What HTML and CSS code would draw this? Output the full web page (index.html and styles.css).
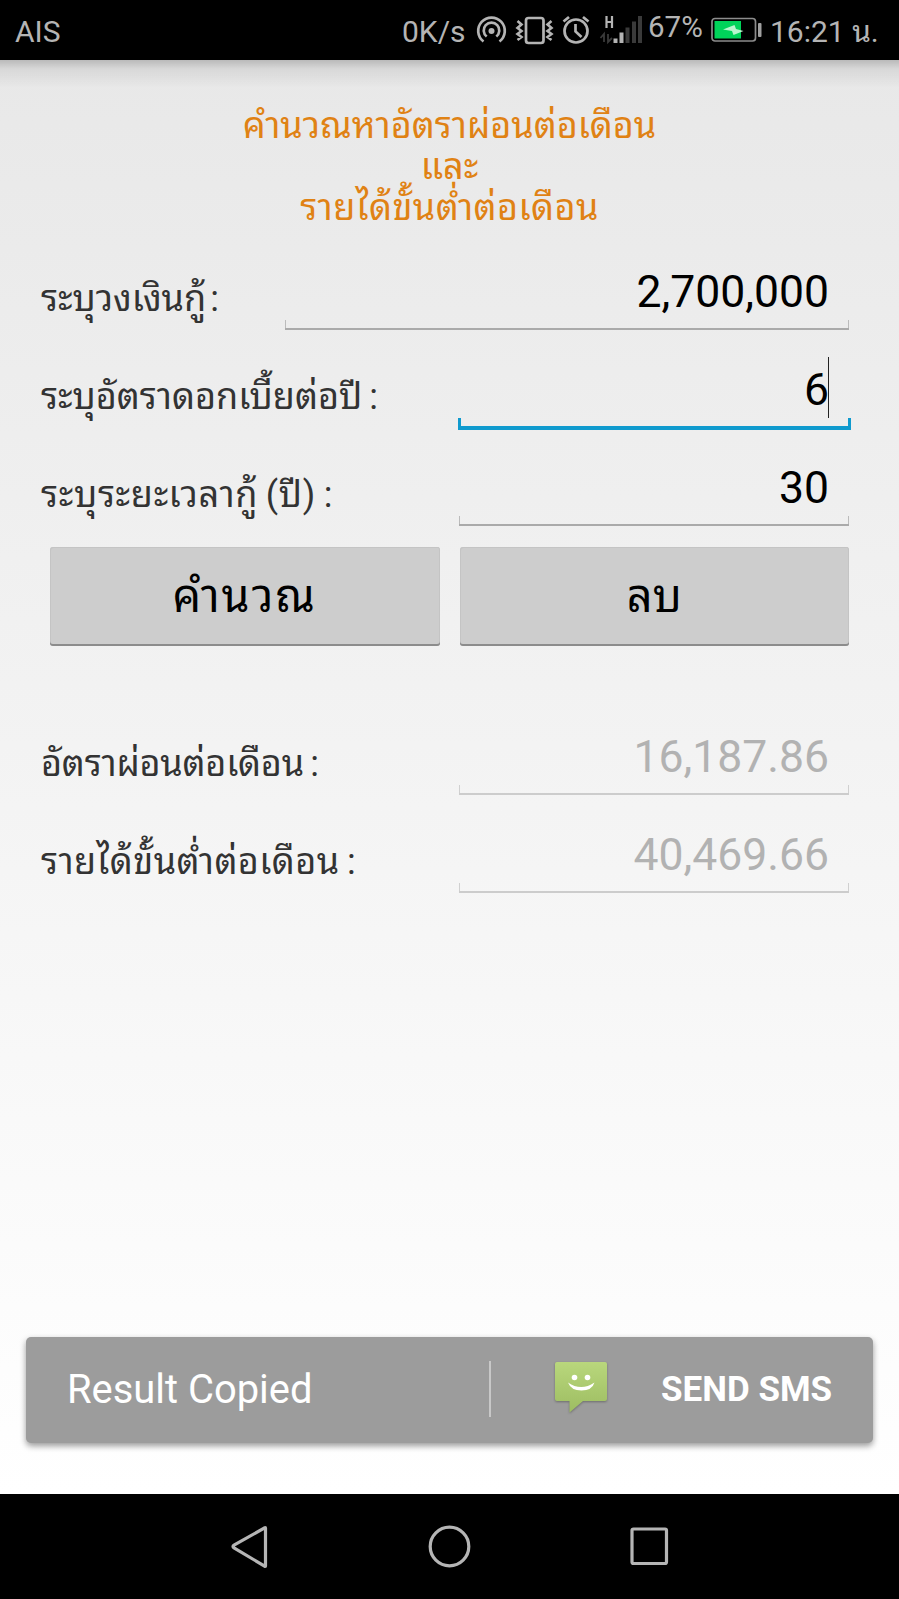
FILE: index.html
```html
<!DOCTYPE html>
<html lang="th">

<head>
    <meta charset="UTF-8">
    <meta name="viewport" content="width=device-width, initial-scale=1.0">
    <title>คำนวณหาอัตราผ่อนต่อเดือน</title>
    <link rel="stylesheet" href="styles.css">
</head>

<body>
    <header class="status-bar">
        <span class="carrier">AIS</span>
        <span class="speed">0K/s</span>
        <!-- hotspot, vibrate, alarm, signal -->
        <svg class="status-icons" width="168" height="36" viewBox="0 0 168 36" fill="none" stroke="#b4b4b4" stroke-width="2.7">
            <path d="M9.5 29.5A13.3 13.3 0 1 1 25.500 29.500"></path>
            <path d="M12.700 24.500A7.800 7.800 0 1 1 22.300 24.500"></path>
            <circle cx="17.500" cy="19" r="3" fill="#b4b4b4" stroke="none"></circle>
            <rect x="52" y="6" width="17.500" height="25" rx="2.500"></rect>
            <path d="M43.500 9l4 3.500-4 3.500 4 3-4 3 4 3-4 3M77.500 9l-4 3.500 4 3.500-4 3 4 3-4 3 4 3" stroke-width="2.600"></path>
            <circle cx="102" cy="19" r="11.500"></circle>
            <path d="M101.500 12v7.500l6 5.500M89.500 9.500l5.500-4.500M114.500 9.500L109 5"></path>
            <path d="M132.500 4v12M138 4v12M132.500 10h5.500" stroke-width="2.200"></path>
            <path d="M130 30v-8l-3.500 4M134 22v8l4-4" stroke="#3a3a3a" stroke-width="1.800"></path>
            <path d="M141.500 31v-4.500M147.500 31V20.500" stroke-width="4"></path>
            <path d="M153.500 31V15.500M160 31V9.500M166 31V4" stroke="#3a3a3a" stroke-width="4"></path>
        </svg>
        <span class="percent">67%</span>
        <svg class="battery" width="52" height="26" viewBox="0 0 52 26">
            <rect x="1" y="1.500" width="43.500" height="22.500" rx="3" fill="none" stroke="#8c8c8c" stroke-width="1.700"></rect>
            <rect x="3.500" y="4" width="26.500" height="17.500" fill="#00d45a"></rect>
            <path d="M12 12.500L23.500 8l1.500 4 7.500 2-10 4-1.500-4z" fill="#b9f5ce"></path>
            <rect x="47" y="6" width="3.500" height="14" rx="1" fill="#a0a0a0"></rect>
        </svg>
        <span class="clock">16:21 น.</span>
    </header>

    <main class="screen">
        <h1 class="title">
            <span class="title-line title-first">คำนวณหาอัตราผ่อนต่อเดือน</span>
            <span class="title-line title-and">และ</span>
            <span class="title-line title-last">รายได้ขั้นต่ำต่อเดือน</span>
        </h1>

        <section class="form">
            <div class="row">
                <div class="label label-loan">ระบุวงเงินกู้ :</div>
                <div class="field field-wide">2,700,000</div>
            </div>
            <div class="row">
                <div class="label label-rate">ระบุอัตราดอกเบี้ยต่อปี :</div>
                <div class="field field-focus">6<i class="caret"></i></div>
            </div>
            <div class="row">
                <div class="label label-years">ระบุระยะเวลากู้ (ปี) :</div>
                <div class="field">30</div>
            </div>
            <div class="buttons">
                <button class="btn btn-calc">คำนวณ</button>
                <button class="btn">ลบ</button>
            </div>
        </section>

        <section class="form results">
            <div class="row">
                <div class="label label-monthly">อัตราผ่อนต่อเดือน :</div>
                <div class="field field-disabled">16,187.86</div>
            </div>
            <div class="row">
                <div class="label label-income">รายได้ขั้นต่ำต่อเดือน :</div>
                <div class="field field-disabled">40,469.66</div>
            </div>
        </section>

        <div class="toast">
            <span class="toast-text">Result Copied</span>
            <span class="toast-divider"></span>
            <svg class="sms-icon" width="56" height="56" viewBox="0 0 56 56">
                <defs>
                    <linearGradient id="smsFill" x1="0" y1="0" x2="0" y2="1">
                        <stop offset="0" stop-color="#b9d77c"></stop>
                        <stop offset="1" stop-color="#9dbd62"></stop>
                    </linearGradient>
                </defs>
                <path d="M4 1h48q2 0 2 2v35q0 2-2 2H30L16.500 51.500V40H4q-2 0-2-2V3q0-2 2-2z" fill="url(#smsFill)"></path>
                <circle cx="21.500" cy="16.500" r="2.800" fill="#fff"></circle>
                <circle cx="34.500" cy="16.500" r="2.800" fill="#fff"></circle>
                <path d="M15 21.500q13 9 26.500 0q-2.500 8-13 8T15 21.500z" fill="#fff"></path>
            </svg>
            <span class="toast-action">SEND SMS</span>
        </div>
    </main>

    <nav class="nav-bar">
        <svg width="44" height="44" viewBox="0 0 44 44"><path d="M37.500 3v38q0 1-1 0L6 23q-2-1.500 0-3L36.500 3q1-1 1 0z"></path></svg>
        <svg width="44" height="44" viewBox="0 0 44 44"><circle cx="21.500" cy="21.500" r="19.300"></circle></svg>
        <svg width="44" height="44" viewBox="0 0 44 44"><rect x="4" y="4" width="34.500" height="34.500" rx="1.500"></rect></svg>
    </nav>
</body>

</html>
```
FILE: styles.css
```css
* {
    box-sizing: border-box;
}

body {
    margin: 0;
    width: 899px;
    height: 1599px;
    display: flex;
    flex-direction: column;
    overflow: hidden;
    font-family: Roboto, "Noto Sans Thai Looped", "Droid Sans Thai", Loma, Waree, Garuda, Umpush, Laksaman, "Noto Sans", sans-serif;
    background-color: #000;
}

/* status bar */
.status-bar {
    height: 60px;
    display: flex;
    align-items: center;
    color: #b4b4b4;
    font-size: 30px;
    line-height: 60px;
    white-space: nowrap;
}

.carrier {
    width: 387px;
    padding-left: 15px;
    padding-top: 3px;
}

.speed {
    width: 87px;
    padding-left: 15px;
    padding-top: 3px;
}

.status-icons {
    margin-top: -1px;
}

.percent {
    width: 62px;
    margin-left: 6px;
    padding-bottom: 7px;
    font-size: 29.5px;
}

.battery {
    margin-left: 1px;
}

.clock {
    padding-top: 3px;
    margin-left: 7px;
}

/* screen */
.screen {
    height: 1434px;
    display: flex;
    flex-direction: column;
    background: linear-gradient(rgba(0, 0, 0, 0.2), rgba(0, 0, 0, 0.07) 9px, transparent 28px) top / 100% 28px no-repeat,
        linear-gradient(#e8e8e8, #fff);
}

.title {
    height: 172px;
    margin: 0;
    padding-top: 46px;
    display: flex;
    flex-direction: column;
    align-items: center;
    color: #e08214;
    font-size: 36px;
    font-weight: 400;
    white-space: nowrap;
}

.title-line {
    height: 41px;
    line-height: 41px;
}

.title-last {
    letter-spacing: 0.45px;
}

.form {
    width: 849px;
    padding-left: 40px;
}

.row {
    height: 98px;
    display: flex;
    justify-content: space-between;
    align-items: flex-end;
}

.label {
    height: 61px;
    padding-left: 1px;
    line-height: 60px;
    color: #333;
    font-size: 36px;
    white-space: nowrap;
}

.label-loan {
    word-spacing: -5px;
}

.label-rate {
    word-spacing: -2px;
}

.label-years {
    letter-spacing: 0.7px;
    word-spacing: -2px;
}

.label-monthly {
    letter-spacing: -0.2px;
    word-spacing: -2.5px;
}

.label-income {
    letter-spacing: 0.45px;
    word-spacing: -2px;
}

.field {
    width: 390px;
    height: 68px;
    padding: 0 20px 0 0;
    line-height: 61px;
    color: #000;
    font-size: 44.5px;
    text-align: right;
    background: linear-gradient(#aaa, #aaa) bottom / 100% 2px no-repeat,
        linear-gradient(#bbb, #bbb) left bottom / 1px 10px no-repeat,
        linear-gradient(#bbb, #bbb) right bottom / 1px 10px no-repeat;
}

.field-wide {
    width: 564px;
    line-height: 60px;
}

.field-focus {
    position: relative;
    width: 393px;
    height: 70px;
    margin: 0 -2px -2px 0;
    padding-right: 22px;
    background: linear-gradient(#0f9ace, #0f9ace) bottom / 100% 4px no-repeat,
        linear-gradient(#0f9ace, #0f9ace) left bottom / 3px 12px no-repeat,
        linear-gradient(#0f9ace, #0f9ace) right bottom / 3px 12px no-repeat;
}

.caret {
    position: absolute;
    right: 22px;
    bottom: 12px;
    width: 1px;
    height: 61px;
    background-color: #222;
}

.field-disabled {
    color: #b2b2b2;
    line-height: 60px;
    background: linear-gradient(#ccc, #ccc) bottom / 100% 2px no-repeat,
        linear-gradient(#d0d0d0, #d0d0d0) left bottom / 1px 10px no-repeat,
        linear-gradient(#d0d0d0, #d0d0d0) right bottom / 1px 10px no-repeat;
}

.buttons {
    display: flex;
    gap: 20px;
    padding: 21px 0 0 10px;
}

.btn {
    flex: 1;
    height: 99px;
    padding: 0 0 10px;
    border: 0;
    border-radius: 3px;
    background-color: #cdcdcd;
    box-shadow: inset 0 -2px #8c8c8c, inset 1px 1px #c4c4c4, inset -1px 0 #c4c4c4;
    font-family: inherit;
    font-size: 45px;
    color: #000;
}

.btn-calc {
    letter-spacing: 2px;
}

.results {
    padding-top: 51px;
}

/* toast */
.toast {
    width: 847px;
    height: 106px;
    margin: auto 26px 51px;
    padding-bottom: 2px;
    display: flex;
    align-items: center;
    border-radius: 5px;
    background-color: #9c9c9c;
    box-shadow: 0 3px 6px rgba(0, 0, 0, 0.4);
    color: #fff;
    white-space: nowrap;
}

.toast-text {
    width: 463px;
    padding-left: 41px;
    font-size: 39.9px;
}

.toast-divider {
    width: 2px;
    height: 56px;
    background-color: #c8c8c8;
}

.sms-icon {
    margin-left: 62px;
    filter: drop-shadow(0 1px 1px rgba(0, 0, 0, 0.3));
}

.toast-action {
    margin-left: 52px;
    font-size: 35px;
    font-weight: 700;
}

/* navigation bar */
.nav-bar {
    height: 105px;
    display: flex;
    justify-content: center;
    align-items: center;
    gap: 156px;
    fill: none;
    stroke: #b5b5b5;
    stroke-width: 3.2;
}
```
